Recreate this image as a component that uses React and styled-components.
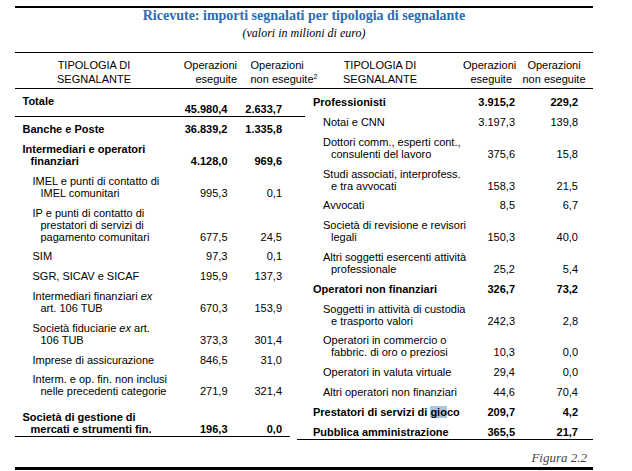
import React from "react"
import styled, { createGlobalStyle } from "styled-components"

const LEFT_COLS = "158px 54.5px 54.5px 15px"
const RIGHT_COLS = "173px 45px 63px 15px"

const App = () => {
  return (
    <Page>
      <GlobalStyle />
      <Rule $weight={2} $top={6} />
      <Title>Ricevute: importi segnalati per tipologia di segnalante</Title>
      <Subtitle>(valori in milioni di euro)</Subtitle>
      <Rule $top={12} />
      <Header>
        <HeadGroup $cols="158px 69.5px 54.5px">
          <HeadCell>TIPOLOGIA DI<br />SEGNALANTE</HeadCell>
          <HeadCell $align="right" $right={5.5}>Operazioni<br />eseguite</HeadCell>
          <HeadCell $left={8} $nowrap>Operazioni<br />non eseguite<Sup>2</Sup></HeadCell>
        </HeadGroup>
        <HeadGroup $cols="166px 52px 78px">
          <HeadCell>TIPOLOGIA DI<br />SEGNALANTE</HeadCell>
          <HeadCell $align="right" $right={3} $nowrap>Operazioni<br />eseguite</HeadCell>
          <HeadCell $nowrap>Operazioni<br />non eseguite</HeadCell>
        </HeadGroup>
      </Header>
      <Rule />
      <Body>
        <Half>
          <TotalRow $cols={LEFT_COLS} $bold>
            <Label $indent={7.5}>Totale</Label>
            <Num>45.980,4</Num>
            <Num>2.633,7</Num>
          </TotalRow>
          <Rule $right={-8} />
          {leftRows.map((row, i) => (
            <TableRow key={i} row={row} cols={LEFT_COLS} indent={row.bold ? 7.5 : 17.5} />
          ))}
          <Rule $right={7} />
        </Half>
        <Half $pad={1}>
          {rightRows.map((row, i) => (
            <TableRow key={i} row={row} cols={RIGHT_COLS} indent={row.bold ? 16 : 26} />
          ))}
          <Rule />
        </Half>
      </Body>
      <Caption>Figura 2.2</Caption>
      <Rule $weight={3} $top={2} />
    </Page>
  )
}

const TableRow = ({ row, cols, indent }) => (
  <Row $cols={cols} $bold={row.bold} $extra={row.extra}>
    <Label $indent={indent}>
      {row.label.map((line, i) => (
        <Line key={i} $cont={i > 0}>{line}</Line>
      ))}
    </Label>
    <Num>{row.a}</Num>
    <Num>{row.b}</Num>
  </Row>
)

const GlobalStyle = createGlobalStyle`
  html, body {
    margin: 0;
    padding: 0;
    background: #fff;
  }
  body {
    font-family: "Liberation Sans", Arial, sans-serif;
    color: #000;
  }
`

const Page = styled.div`
  width: 578px;
  height: 471px;
  margin-left: 15px;
  overflow: hidden;
`

const Rule = styled.div`
  height: ${p => p.$weight || 1}px;
  margin-top: ${p => p.$top || 0}px;
  margin-right: ${p => p.$right || 0}px;
  background: #000;
`

const Title = styled.h1`
  margin: 0;
  font: bold 14px/16px "Liberation Serif", "Times New Roman", serif;
  color: #2a6db0;
  text-align: center;
`

const Subtitle = styled.div`
  margin-top: 2px;
  font: italic 12px/14px "Liberation Serif", "Times New Roman", serif;
  text-align: center;
`

const Header = styled.div`
  display: grid;
  grid-template-columns: 282px 296px;
  padding: 5px 0 2px;
`

const HeadGroup = styled.div`
  display: grid;
  grid-template-columns: ${p => p.$cols};
  font-size: 11px;
  line-height: 14px;
`

const HeadCell = styled.div`
  text-align: ${p => p.$align || "center"};
  padding-left: ${p => p.$left || 0}px;
  padding-right: ${p => p.$right || 0}px;
  white-space: ${p => p.$nowrap ? "nowrap" : "normal"};
`

const Sup = styled.sup`
  font-size: 7px;
  line-height: 0;
  vertical-align: 4px;
`

const Body = styled.div`
  display: grid;
  grid-template-columns: 282px 296px;
  align-items: start;
`

const Half = styled.div`
  display: flex;
  flex-direction: column;
  padding-top: ${p => p.$pad || 0}px;
`

const Row = styled.div`
  display: grid;
  grid-template-columns: ${p => p.$cols};
  padding: ${p => 6.3 + (p.$extra || 0)}px 0 1.5px;
  font-size: 11px;
  line-height: 12px;
  font-weight: ${p => p.$bold ? 700 : 400};
`

const TotalRow = styled(Row)`
  padding: 6px 0 1px;
  grid-template-rows: 20px;
`

const Label = styled.div`
  align-self: start;
  padding-left: ${p => p.$indent}px;
`

const Line = styled.span`
  display: block;
  padding-left: ${p => p.$cont ? 8 : 0}px;
  white-space: nowrap;
`

const Num = styled.div`
  align-self: end;
  text-align: right;
`

const Selected = styled.span`
  background: #a9c6e2;
`

const Caption = styled.div`
  margin-top: 9.5px;
  padding-right: 6px;
  text-align: right;
  font: italic 13px/15px "Liberation Serif", "Times New Roman", serif;
  color: #444;
`

const leftRows = [
  { label: ["Banche e Poste"], a: "36.839,2", b: "1.335,8", bold: true },
  { label: ["Intermediari e operatori", "finanziari"], a: "4.128,0", b: "969,6", bold: true },
  { label: ["IMEL e punti di contatto di", "IMEL comunitari"], a: "995,3", b: "0,1" },
  { label: ["IP e punti di contatto di", "prestatori di servizi di", "pagamento comunitari"], a: "677,5", b: "24,5" },
  { label: ["SIM"], a: "97,3", b: "0,1" },
  { label: ["SGR, SICAV e SICAF"], a: "195,9", b: "137,3" },
  { label: [<>Intermediari finanziari <i>ex</i></>, "art. 106 TUB"], a: "670,3", b: "153,9" },
  { label: [<>Società fiduciarie <i>ex</i> art.</>, "106 TUB"], a: "373,3", b: "301,4" },
  { label: ["Imprese di assicurazione"], a: "846,5", b: "31,0" },
  { label: ["Interm. e op. fin. non inclusi", "nelle precedenti categorie"], a: "271,9", b: "321,4" },
  { label: ["Società di gestione di", "mercati e strumenti fin."], a: "196,3", b: "0,0", bold: true, extra: 5.5 },
]

const rightRows = [
  { label: ["Professionisti"], a: "3.915,2", b: "229,2", bold: true },
  { label: ["Notai e CNN"], a: "3.197,3", b: "139,8" },
  { label: ["Dottori comm., esperti cont.,", "consulenti del lavoro"], a: "375,6", b: "15,8" },
  { label: ["Studi associati, interprofess.", "e tra avvocati"], a: "158,3", b: "21,5" },
  { label: ["Avvocati"], a: "8,5", b: "6,7" },
  { label: ["Società di revisione e revisori", "legali"], a: "150,3", b: "40,0" },
  { label: ["Altri soggetti esercenti attività", "professionale"], a: "25,2", b: "5,4" },
  { label: ["Operatori non finanziari"], a: "326,7", b: "73,2", bold: true },
  { label: ["Soggetti in attività di custodia", "e trasporto valori"], a: "242,3", b: "2,8" },
  { label: ["Operatori in commercio o", "fabbric. di oro o preziosi"], a: "10,3", b: "0,0" },
  { label: ["Operatori in valuta virtuale"], a: "29,4", b: "0,0" },
  { label: ["Altri operatori non finanziari"], a: "44,6", b: "70,4" },
  { label: [<>Prestatori di servizi di <Selected>gio</Selected>co</>], a: "209,7", b: "4,2", bold: true },
  { label: ["Pubblica amministrazione"], a: "365,5", b: "21,7", bold: true },
]

export default App
